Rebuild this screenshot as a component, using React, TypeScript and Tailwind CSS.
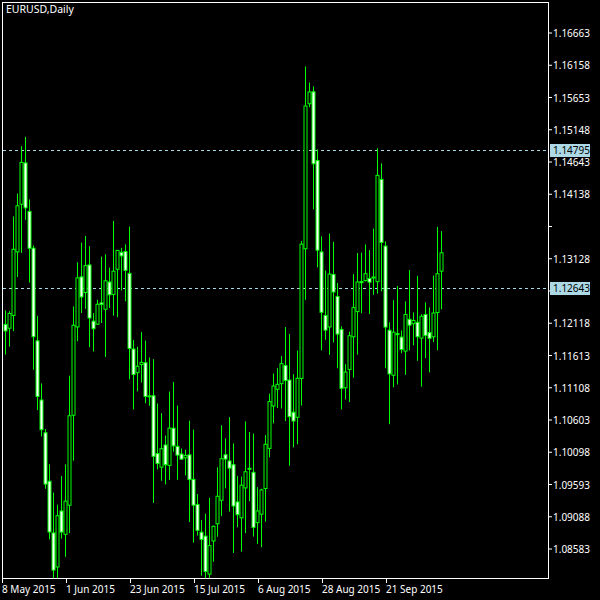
import React from 'react';

type Bar = { o: number; h: number; l: number; c: number };

// rough shape of the series: [x pixel, close]
const anchors: [number, number][] = [
  [5, 1.118], [10, 1.125], [18, 1.14], [22, 1.146], [30, 1.13], [35, 1.112], [42, 1.102],
  [48, 1.09], [53, 1.083], [58, 1.09], [65, 1.09], [70, 1.11], [75, 1.128], [80, 1.125],
  [85, 1.13], [92, 1.12], [100, 1.124], [105, 1.128], [110, 1.125], [118, 1.135], [125, 1.132],
  [130, 1.115], [140, 1.115], [148, 1.11], [155, 1.1], [165, 1.1], [170, 1.105], [178, 1.1],
  [185, 1.1], [192, 1.094], [200, 1.088], [207, 1.083], [212, 1.09], [220, 1.097], [228, 1.103],
  [235, 1.09], [240, 1.093], [248, 1.1], [255, 1.088], [262, 1.095], [268, 1.106], [275, 1.112],
  [282, 1.115], [290, 1.105], [295, 1.104], [300, 1.125], [303, 1.145], [307, 1.16], [310, 1.158],
  [315, 1.14], [320, 1.122], [325, 1.12], [330, 1.128], [335, 1.123], [340, 1.112], [345, 1.115],
  [352, 1.12], [360, 1.13], [368, 1.127], [375, 1.13], [378, 1.146], [382, 1.13], [388, 1.113],
  [395, 1.12], [402, 1.118], [408, 1.123], [415, 1.12], [422, 1.122], [428, 1.118], [435, 1.125],
  [441, 1.132],
];

function rnd(seed: number) {
  const x = Math.sin(seed * 127.1 + 311.7) * 43758.5453;
  return x - Math.floor(x);
}

function closeAt(x: number) {
  for (let k = 0; k < anchors.length - 1; k++) {
    const [a, pa] = anchors[k];
    const [b, pb] = anchors[k + 1];
    if (x >= a && x <= b) return pa + ((pb - pa) * (x - a)) / (b - a);
  }
  return anchors[anchors.length - 1][1];
}

const bx = (i: number) => 4 + i * 4;
const bars: Bar[] = [];
for (let i = 0; i <= 109; i++) {
  const c = closeAt(bx(i) + 1.5) + (rnd(i) - 0.5) * 0.004;
  const o = i === 0 ? 1.121 : bars[i - 1].c + (rnd(i + 500) - 0.5) * 0.0015;
  const h = Math.max(o, c) + rnd(i + 900) * 0.008;
  const l = Math.min(o, c) - rnd(i + 1300) * 0.008;
  bars.push({ o, h, l, c });
}

const py = (p: number) => 33 + ((1.16663 - p) / 0.00505) * 32.25;

const priceLabels = [
  '1.16663', '1.16158', '1.15653', '1.15148', '1.14643', '1.14138', '', '1.13128', '',
  '1.12118', '1.11613', '1.11108', '1.10603', '1.10098', '1.09593', '1.09088', '1.08583',
];

const dates: [number, string][] = [
  [2, '8 May 2015'], [66, '1 Jun 2015'], [130, '23 Jun 2015'], [194, '15 Jul 2015'],
  [258, '6 Aug 2015'], [322, '28 Aug 2015'], [386, '21 Sep 2015'],
];

export default function App() {
  return (
    <div className="flex w-[600px] h-[600px] bg-black overflow-hidden font-['Liberation_Sans',Arial,sans-serif]">
      <svg width="600" height="600">
        <rect x="2.5" y="2.5" width="546" height="576" fill="none" stroke="#fff" strokeWidth="1" />
        <text x="6" y="13" fill="#fff" fontSize="10.5">EURUSD,Daily</text>

        <line x1="3" x2="548" y1="150.5" y2="150.5" stroke="#a8d8e8" strokeDasharray="3 3" />
        <line x1="3" x2="548" y1="288.5" y2="288.5" stroke="#a8d8e8" strokeDasharray="3 3" />

        {bars.map((b, i) => {
          const x = bx(i);
          const top = py(Math.max(b.o, b.c));
          const bot = py(Math.min(b.o, b.c));
          return (
            <g key={i}>
              <line x1={x + 1.5} x2={x + 1.5} y1={Math.max(3, py(b.h))} y2={Math.min(578, py(b.l))} stroke="#00ff00" />
              <rect x={x} y={top} width="3" height={Math.max(1, bot - top)} fill={b.c < b.o ? '#fff' : '#000'} stroke="#00ff00" strokeWidth="1" />
            </g>
          );
        })}

        {priceLabels.map((t, k) => {
          const y = 33 + k * 32.25;
          return (
            <g key={k}>
              <line x1="548" x2="552" y1={y} y2={y} stroke="#fff" />
              {t && <text x="553" y={y + 4} fill="#fff" fontSize="10">{t}</text>}
            </g>
          );
        })}
        <rect x="550" y="144" width="40" height="13" fill="#add8e6" />
        <text x="553" y="154" fill="#000" fontSize="10">1.14795</text>
        <rect x="550" y="282" width="40" height="13" fill="#add8e6" />
        <text x="553" y="292" fill="#000" fontSize="10">1.12643</text>

        {dates.map(([x, t]) => (
          <g key={t}>
            <line x1={x + 0.5} x2={x + 0.5} y1="579" y2="583" stroke="#fff" />
            <text x={x} y="593" fill="#fff" fontSize="10">{t}</text>
          </g>
        ))}
      </svg>
    </div>
  );
}
